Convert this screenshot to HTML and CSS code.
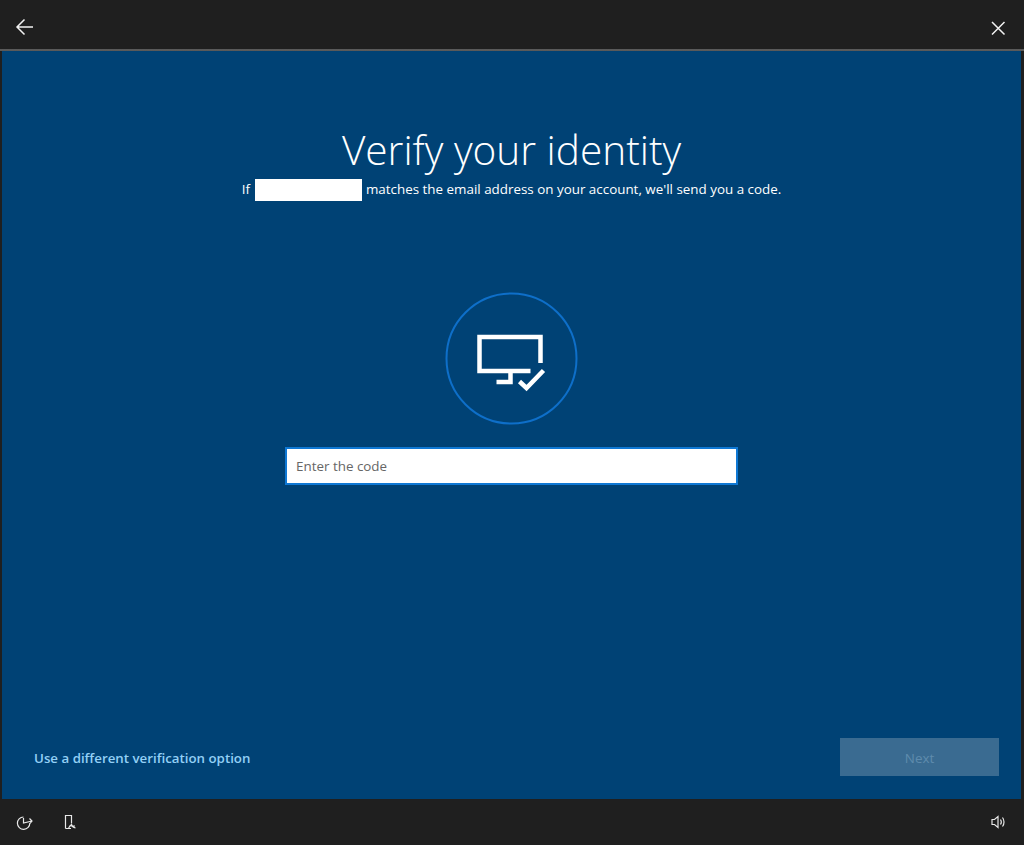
FILE: index.html
```html
<!DOCTYPE html>
<html lang="en">
<head>
<meta charset="utf-8">
<title>Verify your identity</title>
<link rel="stylesheet" href="styles.css">
</head>
<body>
<div class="window">
  <header class="topbar">
    <svg class="icon-back" width="20" height="18" viewBox="0 0 20 18"><path d="M18 9H2M9.500 1.500L2 9l7.500 7.500"/></svg>
    <svg class="icon-close" width="16" height="16" viewBox="0 0 16 16"><path d="M2 2l12.500 12.500M14.500 2L2 14.500"/></svg>
  </header>
  <main class="content">
    <h1 class="title">Verify your identity</h1>
    <p class="subtitle">If <span class="redacted"></span> matches the email address on your account, we'll send you a code.</p>
    <svg class="badge" width="134" height="134" viewBox="0 0 134 134">
      <circle class="badge-ring" cx="66.500" cy="66.500" r="65"/>
      <path class="badge-line" d="M95.500 71V45H34.500V79H85.500M65.500 79V90H51.500"/>
      <path class="badge-check" d="M74.500 89.500l7 6.500 17-17.500"/>
    </svg>
    <input class="code-input" type="text" placeholder="Enter the code">
    <div class="actions">
      <a class="alt-link" href="#">Use a different verification option</a>
      <button class="next" type="button" disabled>Next</button>
    </div>
  </main>
  <footer class="bottombar">
    <div class="bottom-left">
      <svg class="tool" width="18" height="18" viewBox="0 0 18 18"><path d="M14.800 10A6.200 6.200 0 1 1 8.500 4M8.500 5V10L17 8M14.500 5.500L17 8L15 10.500"/></svg>
      <svg class="tool" width="18" height="18" viewBox="0 0 18 18"><path d="M4.500 15.500V2.500H10.500V10.500M4.500 15.500H10M7.500 15.500c.8-2 2-3.500 3-4 .5 1.800 2 3 4 3.500M9 13h5"/></svg>
    </div>
    <svg class="tool" width="16" height="16" viewBox="0 0 16 16"><path d="M2 5.500V10.500H4.500L8 13.500V2.500L4.500 5.500ZM10.500 5.500c1 1.500 1 3.500 0 5M12.500 3.500c2 2.500 2 6.500 0 9"/></svg>
  </footer>
</div>
</body>
</html>
```

FILE: styles.css
```css
* { box-sizing: border-box; }
html, body { margin: 0; height: 100%; }
body {
  background: #1f1f1f;
  color: #fff;
  font-family: "Open Sans", "Noto Sans", "Liberation Sans", sans-serif;
}
.window {
  height: 845px;
  display: flex;
  flex-direction: column;
}
.topbar {
  height: 51px;
  flex: none;
  display: flex;
  justify-content: space-between;
  align-items: flex-start;
  padding: 18px 18px 0 15px;
  border-bottom: 2px solid #555;
  border-image: linear-gradient(#3a3a3a, #5a5a5a) 1;
}
.icon-back path, .icon-close path {
  fill: none;
  stroke: #f2f2f2;
  stroke-width: 1.5;
}
.icon-close { margin-top: 2px; }
.content {
  flex: 1;
  margin: 0 3px 0 2px;
  background: #004275;
  display: flex;
  flex-direction: column;
  align-items: center;
  padding-top: 69px;
}
.title {
  margin: 0;
  font-size: 40.600px;
  font-weight: 300;
  line-height: 59px;
}
.subtitle {
  margin: 0;
  height: 22px;
  font-size: 13.400px;
  line-height: 20px;
  white-space: nowrap;
}
.redacted {
  display: inline-block;
  width: 107px;
  height: 22px;
  margin-left: 2px;
  vertical-align: top;
  background: #fff;
}
.badge {
  display: block;
  margin-top: 91px;
  flex: none;
}
.badge-ring {
  fill: none;
  stroke: #0e6fc9;
  stroke-width: 2;
}
.badge-line, .badge-check {
  fill: none;
  stroke: #fff;
  stroke-width: 4.500;
}
.code-input {
  display: block;
  width: 453px;
  height: 38px;
  margin-top: 21px;
  padding: 0 9px;
  border: 2px solid #0f78d4;
  border-radius: 0;
  outline: none;
  background: #fff;
  font: 13.400px "Open Sans", "Noto Sans", sans-serif;
  color: #333;
}
.code-input::placeholder { color: #666; opacity: 1; }
.actions {
  width: 100%;
  margin-top: auto;
  margin-bottom: 23px;
  padding: 0 22px 0 32px;
  display: flex;
  justify-content: space-between;
  align-items: center;
}
.alt-link {
  padding-top: 2px;
  color: #93d0f6;
  font-size: 13.300px;
  font-weight: 600;
  text-decoration: none;
}
.next {
  width: 159px;
  height: 38px;
  border: 0;
  padding: 2px 0 0;
  background: #3a6b91;
  color: #5f8bad;
  font: 13.400px "Open Sans", "Noto Sans", sans-serif;
}
.bottombar {
  height: 46px;
  flex: none;
  display: flex;
  justify-content: space-between;
  align-items: center;
  padding: 0 18px 0 15px;
}
.bottom-left {
  display: flex;
  gap: 28px;
  align-items: center;
}
.tool path {
  fill: none;
  stroke: #e8e8e8;
  stroke-width: 1.200;
}
```
